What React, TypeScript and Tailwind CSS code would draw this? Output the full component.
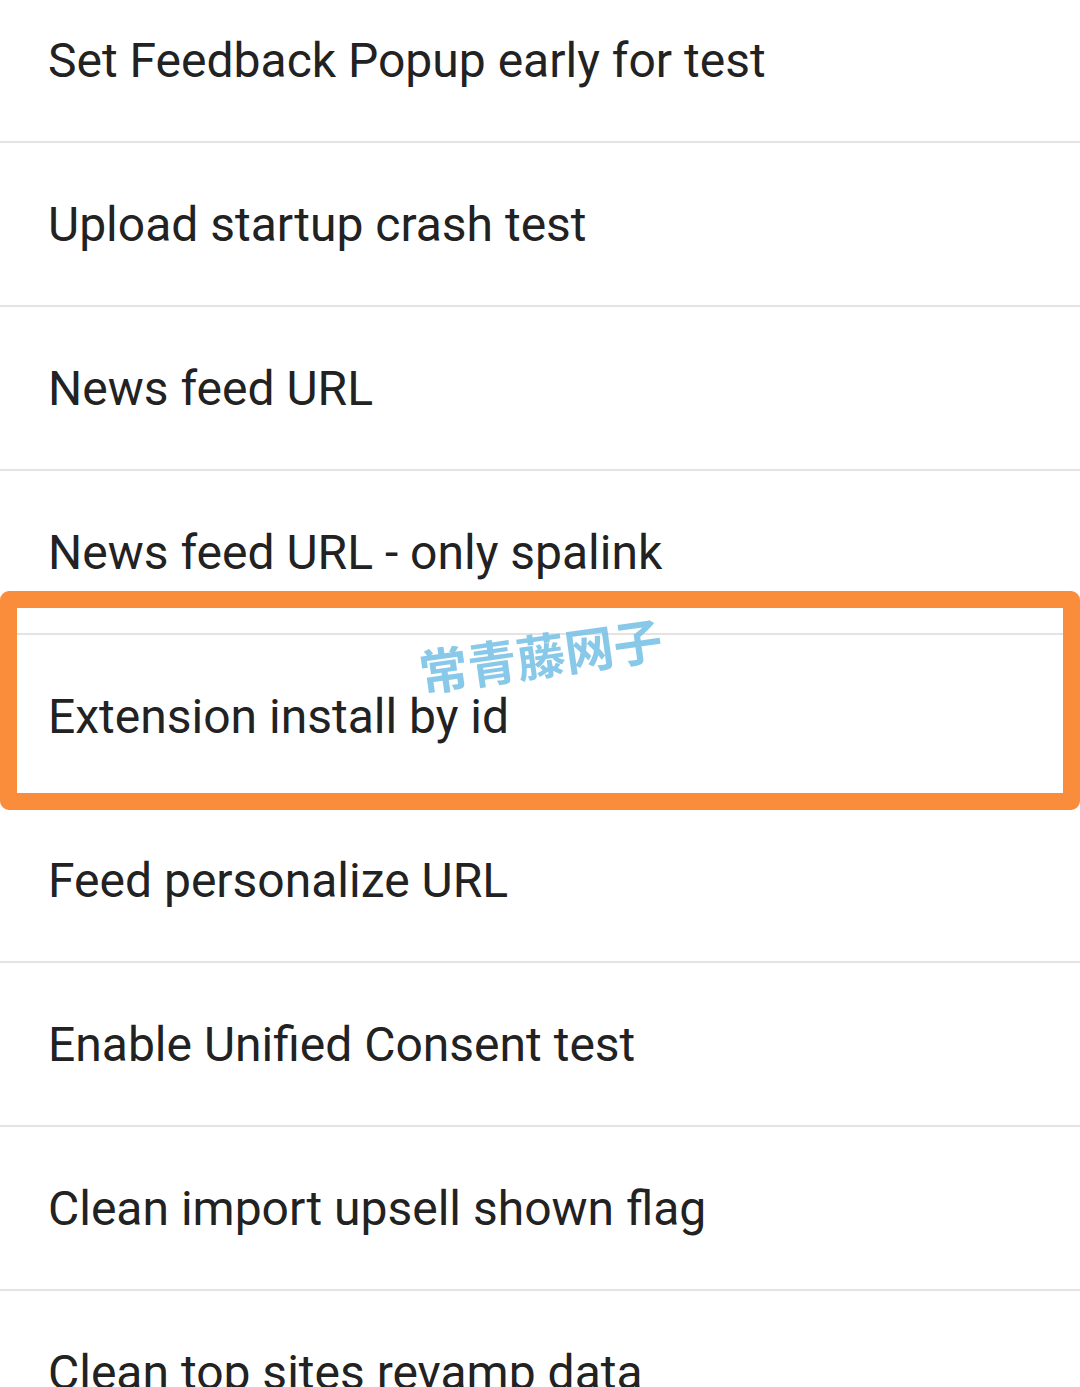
import React from "react";

const items = [
  "Set Feedback Popup early for test",
  "Upload startup crash test",
  "News feed URL",
  "News feed URL - only spalink",
  "Extension install by id",
  "Feed personalize URL",
  "Enable Unified Consent test",
  "Clean import upsell shown flag",
  "Clean top sites revamp data",
];

export default function App() {
  return (
    <div
      className="relative w-[1080px] h-[1387px] overflow-hidden bg-white"
      style={{ fontFamily: "Roboto, 'Noto Sans', sans-serif" }}
    >
      <div className="-mt-[21px] flex flex-col">
        {items.map((t) => (
          <div
            key={t}
            className="h-[164px] shrink-0 border-b-2 border-[#e3e3e3] flex items-center pl-[49px] text-[48px] text-[#222222] leading-none"
          >
            <span className="mt-[2px] -ml-[1px]">{t}</span>
          </div>
        ))}
      </div>
      <div className="absolute left-0 top-[591px] w-[1080px] h-[219px] border-[17px] border-[#fa8d3c] rounded-[9px]" />
      <div
        className="absolute left-[419px] top-[646px] text-[49px] font-semibold text-[#7cc3e6] opacity-90 -rotate-[8deg] origin-left leading-none"
        style={{ fontFamily: "'Noto Sans CJK SC', sans-serif" }}
      >
        常青藤网子
      </div>
    </div>
  );
}
